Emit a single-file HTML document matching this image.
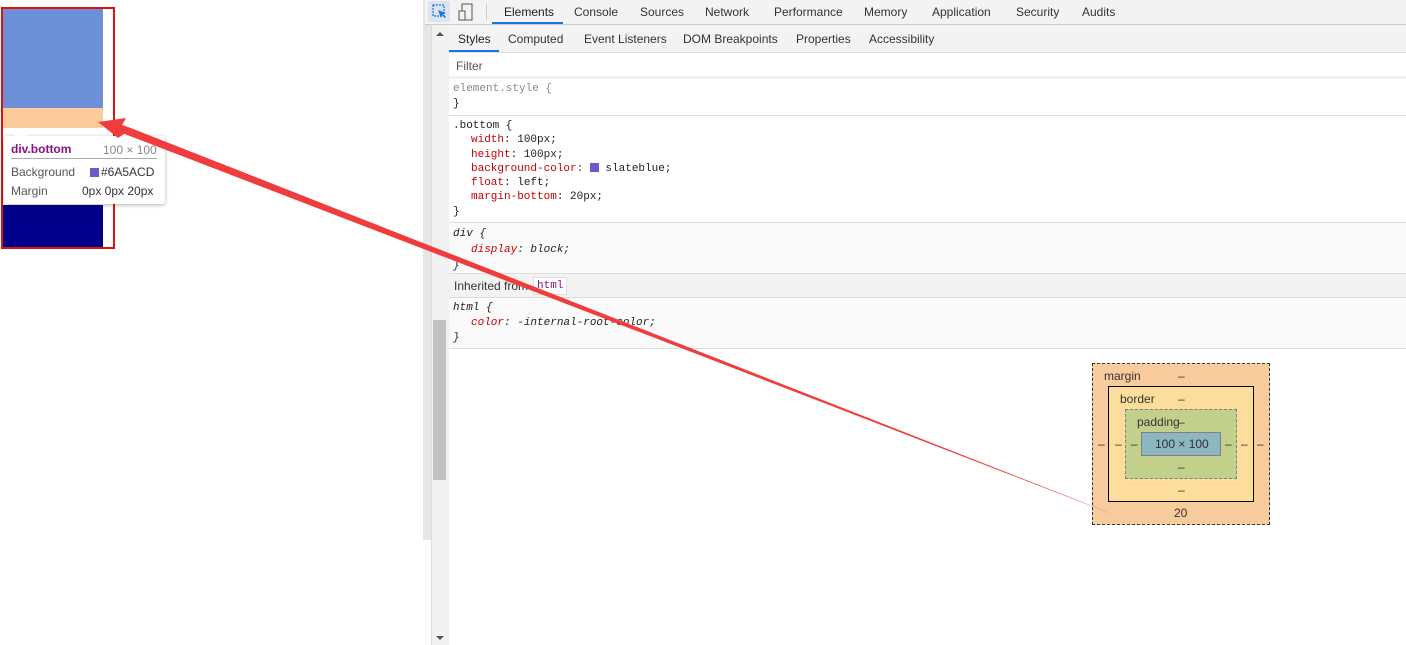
<!DOCTYPE html>
<html><head><style>
body{margin:0;width:1406px;height:645px;position:relative;overflow:hidden;background:#fff;font-family:"Liberation Sans",sans-serif;font-size:12px;color:#333}
.a{position:absolute}
.mono{font-family:"Liberation Mono",monospace;font-size:11px}
.p{color:#c80000}
.i{padding-left:18px}
.tab{position:absolute;top:5px;color:#333;font-size:12px}
.line{position:absolute;left:449px;right:0;height:1px;background:#ddd}
</style></head><body>
<div class="a" style="left:1px;top:7px;width:110px;height:238px;border:2px solid #e01010"></div>
<div class="a" style="left:3px;top:9px;width:100px;height:99px;background:#6d8fd8"></div>
<div class="a" style="left:3px;top:108px;width:100px;height:20px;background:#fbcc9b"></div>
<div class="a" style="left:3px;top:205px;width:100px;height:42px;background:#00008b"></div>
<div class="a" style="left:4px;top:136px;width:161px;height:68px;background:#fff;border-radius:3px;box-shadow:0 1px 4px rgba(0,0,0,.3)"></div>
<div class="a" style="left:14px;top:129px;border:7px solid transparent;border-bottom:7px solid #fff;border-top:0"></div>
<div class="a" style="left:11px;top:142px;font-weight:bold;color:#881280;font-size:12px">div.bottom</div>
<div class="a" style="left:103px;top:143px;color:#888;font-size:12px">100 × 100</div>
<div class="a" style="left:11px;top:158px;width:146px;height:1px;background:#aaa"></div>
<div class="a" style="left:11px;top:165px;color:#555">Background</div>
<div class="a" style="left:90px;top:168px;width:9px;height:9px;background:#6a5acd"></div>
<div class="a" style="left:101px;top:165px;color:#333">#6A5ACD</div>
<div class="a" style="left:11px;top:184px;color:#555">Margin</div>
<div class="a" style="left:82px;top:184px;color:#333">0px 0px 20px</div>
<div class="a" style="left:423px;top:0;width:8px;height:540px;background:#e6e6e6"></div>
<div class="a" style="left:431px;top:24px;width:17px;height:621px;background:#f1f1f1;border-left:1px solid #ddd"></div>
<div class="a" style="left:433px;top:320px;width:13px;height:160px;background:#c1c1c1"></div>
<div class="a" style="left:436px;top:32px;border:4px solid transparent;border-bottom:4px solid #555;border-top:0"></div>
<div class="a" style="left:436px;top:636px;border:4px solid transparent;border-top:4px solid #555;border-bottom:0"></div>
<div class="a" style="left:425px;top:0;right:0;height:24px;background:#f3f3f3;border-bottom:1px solid #ccc"></div>
<div class="a" style="left:428px;top:1px;width:22px;height:21px;background:#dde4ef"></div>
<svg class="a" style="left:432px;top:4px" width="16" height="16"><rect x="1" y="1" width="11" height="11" fill="none" stroke="#1a73e8" stroke-width="1.2" stroke-dasharray="2 1"/><path d="M6 6l8 3-3 1 3 3-1 1-3-3-1 3z" fill="#1a73e8"/></svg>
<svg class="a" style="left:458px;top:3px" width="16" height="18"><rect x="4" y="1" width="10" height="16" fill="none" stroke="#555"/><rect x="1" y="8" width="6" height="9" fill="#f3f3f3" stroke="#555"/></svg>
<div class="a" style="left:486px;top:4px;width:1px;height:16px;background:#ccc"></div>
<div class="tab" style="left:504px;color:#222">Elements</div>
<div class="a" style="left:492px;top:22px;width:71px;height:2px;background:#1a73e8"></div>
<div class="tab" style="left:574px">Console</div>
<div class="tab" style="left:640px">Sources</div>
<div class="tab" style="left:705px">Network</div>
<div class="tab" style="left:774px">Performance</div>
<div class="tab" style="left:864px">Memory</div>
<div class="tab" style="left:932px">Application</div>
<div class="tab" style="left:1016px">Security</div>
<div class="tab" style="left:1082px">Audits</div>
<div class="a" style="left:449px;top:25px;right:0;height:27px;background:#f3f3f3;border-bottom:1px solid #ddd"></div>
<div class="tab" style="left:458px;top:32px;color:#222">Styles</div>
<div class="a" style="left:449px;top:50px;width:50px;height:2px;background:#1a73e8"></div>
<div class="tab" style="left:508px;top:32px">Computed</div>
<div class="tab" style="left:584px;top:32px">Event Listeners</div>
<div class="tab" style="left:683px;top:32px">DOM Breakpoints</div>
<div class="tab" style="left:796px;top:32px">Properties</div>
<div class="tab" style="left:869px;top:32px">Accessibility</div>
<div class="a" style="left:456px;top:59px;color:#555">Filter</div>
<div class="a" style="left:449px;top:76px;right:0;height:3px;background:#f0f0f0"></div>
<div class="a mono" style="left:453px;top:82px;color:#888;line-height:15px">element.style {<br><span style="color:#222">}</span></div>
<div class="line" style="top:115px"></div>
<div class="a mono" style="left:453px;top:119px;line-height:14.3px;color:#222">.bottom {<div class="i"><span class="p">width</span>: 100px;</div><div class="i"><span class="p">height</span>: 100px;</div><div class="i"><span class="p">background-color</span>: <span style="display:inline-block;width:9px;height:9px;background:#6a5acd;vertical-align:-1px"></span> slateblue;</div><div class="i"><span class="p">float</span>: left;</div><div class="i"><span class="p">margin-bottom</span>: 20px;</div>}</div>
<div class="line" style="top:222px"></div>
<div class="a" style="left:449px;top:223px;right:0;height:50px;background:#fafafa"></div>
<div class="a mono" style="left:453px;top:226px;line-height:16px;font-style:italic;color:#222">div {<div class="i"><span class="p">display</span>: block;</div>}</div>
<div class="line" style="top:273px"></div>
<div class="a" style="left:449px;top:274px;right:0;height:23px;background:#f3f3f3"></div>
<div class="a" style="left:454px;top:279px;color:#333">Inherited from</div>
<div class="a mono" style="left:533px;top:277px;border:1px solid #ddd;background:#fff;padding:2px 3px;color:#881280">html</div>
<div class="line" style="top:297px"></div>
<div class="a" style="left:449px;top:298px;right:0;height:50px;background:#fafafa"></div>
<div class="a mono" style="left:453px;top:301px;line-height:15px;font-style:italic;color:#222">html {<div class="i"><span class="p">color</span>: -internal-root-color;</div>}</div>
<div class="line" style="top:348px"></div>
<div class="a" style="left:1092px;top:363px;width:176px;height:160px;background:#f9cc9d;border:1px dashed #333"></div>
<div class="a" style="left:1108px;top:386px;width:144px;height:114px;background:#fddd9b;border:1px solid #000"></div>
<div class="a" style="left:1125px;top:409px;width:110px;height:68px;background:#c3d08b;border:1px dashed #808080"></div>
<div class="a" style="left:1141px;top:432px;width:78px;height:22px;background:#8cb6c0;border:1px solid #808080"></div>
<div class="a" style="left:1104px;top:369px">margin</div><div class="a" style="left:1178px;top:369px">–</div>
<div class="a" style="left:1120px;top:392px">border</div><div class="a" style="left:1178px;top:392px">–</div>
<div class="a" style="left:1137px;top:415px">padding</div><div class="a" style="left:1178px;top:415px">–</div>
<div class="a" style="left:1155px;top:437px">100 × 100</div>
<div class="a" style="left:1098px;top:437px">–</div><div class="a" style="left:1115px;top:437px">–</div><div class="a" style="left:1131px;top:437px">–</div>
<div class="a" style="left:1225px;top:437px">–</div><div class="a" style="left:1241px;top:437px">–</div><div class="a" style="left:1257px;top:437px">–</div>
<div class="a" style="left:1178px;top:460px">–</div><div class="a" style="left:1178px;top:483px">–</div>
<div class="a" style="left:1174px;top:506px">20</div>
<svg class="a" style="left:0;top:0" width="1406" height="645"><polygon points="1115,515 128,127 126,133" fill="#f03c3c"/><polygon points="98,122 126,118 121,127 124,134 118,138" fill="#f03c3c"/><polygon points="1115,515 120,124 117,131" fill="#f03c3c"/></svg>
</body></html>
